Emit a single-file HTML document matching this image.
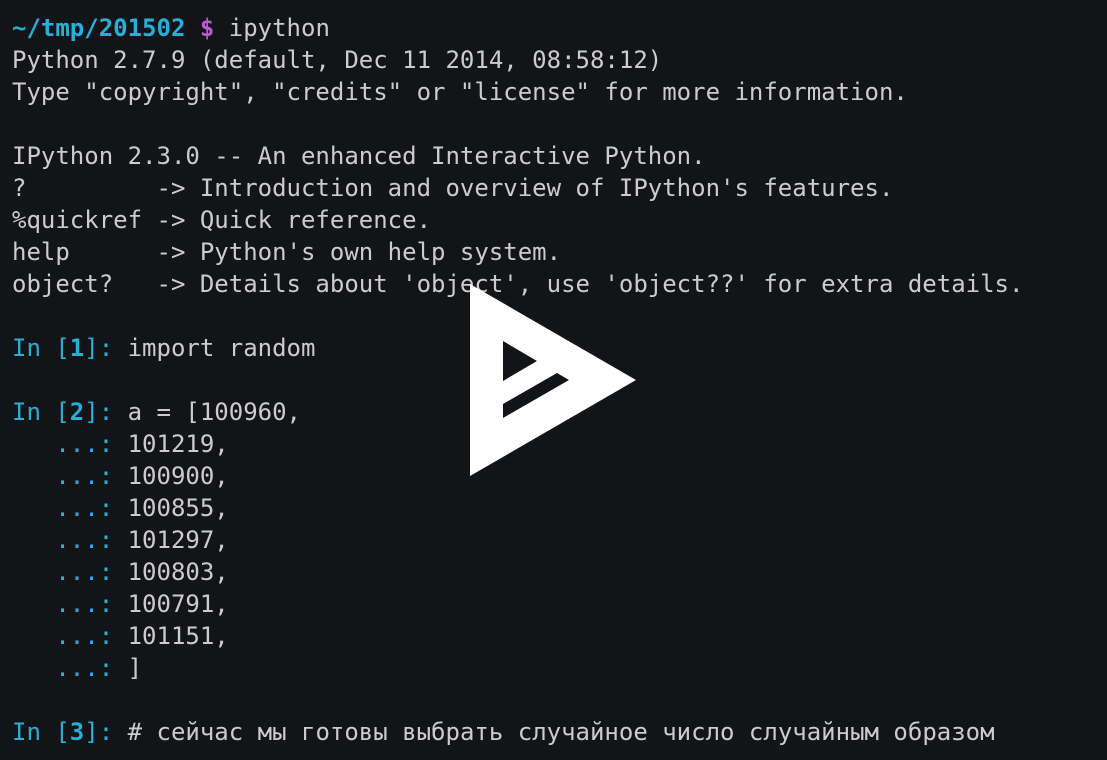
<!DOCTYPE html>
<html><head><meta charset="utf-8"><style>
html,body{margin:0;padding:0;background:#121417;width:1107px;height:760px;overflow:hidden}
pre{margin:0;padding:12px 0 0 12px;font-family:"DejaVu Sans Mono","Liberation Mono",monospace;font-size:24px;line-height:32px;color:#cccccc;white-space:pre}
.c{color:#26b0d7}.b{font-weight:bold}.m{color:#b95ad6}
svg{position:absolute;left:0;top:0}
</style></head><body>
<pre><span class="c b">~/tmp/201502</span> <span class="m b">$</span> ipython
Python 2.7.9 (default, Dec 11 2014, 08:58:12)
Type "copyright", "credits" or "license" for more information.

IPython 2.3.0 -- An enhanced Interactive Python.
?         -> Introduction and overview of IPython's features.
%quickref -> Quick reference.
help      -> Python's own help system.
object?   -> Details about 'object', use 'object??' for extra details.

<span class="c">In [<b>1</b>]: </span>import random

<span class="c">In [<b>2</b>]: </span>a = [100960,
<span class="c">   ...: </span>101219,
<span class="c">   ...: </span>100900,
<span class="c">   ...: </span>100855,
<span class="c">   ...: </span>101297,
<span class="c">   ...: </span>100803,
<span class="c">   ...: </span>100791,
<span class="c">   ...: </span>101151,
<span class="c">   ...: </span>]

<span class="c">In [<b>3</b>]: </span># сейчас мы готовы выбрать случайное число случайным образом</pre>
<svg width="1107" height="760" viewBox="0 0 1107 760">
<path fill="#fff" fill-rule="evenodd" d="M470 284 L636 380 L470 476 Z M503 341 L537 361 L503 381 Z M503 404 L557 373 L569 380 L503 418 Z"/>
</svg>
</body></html>
